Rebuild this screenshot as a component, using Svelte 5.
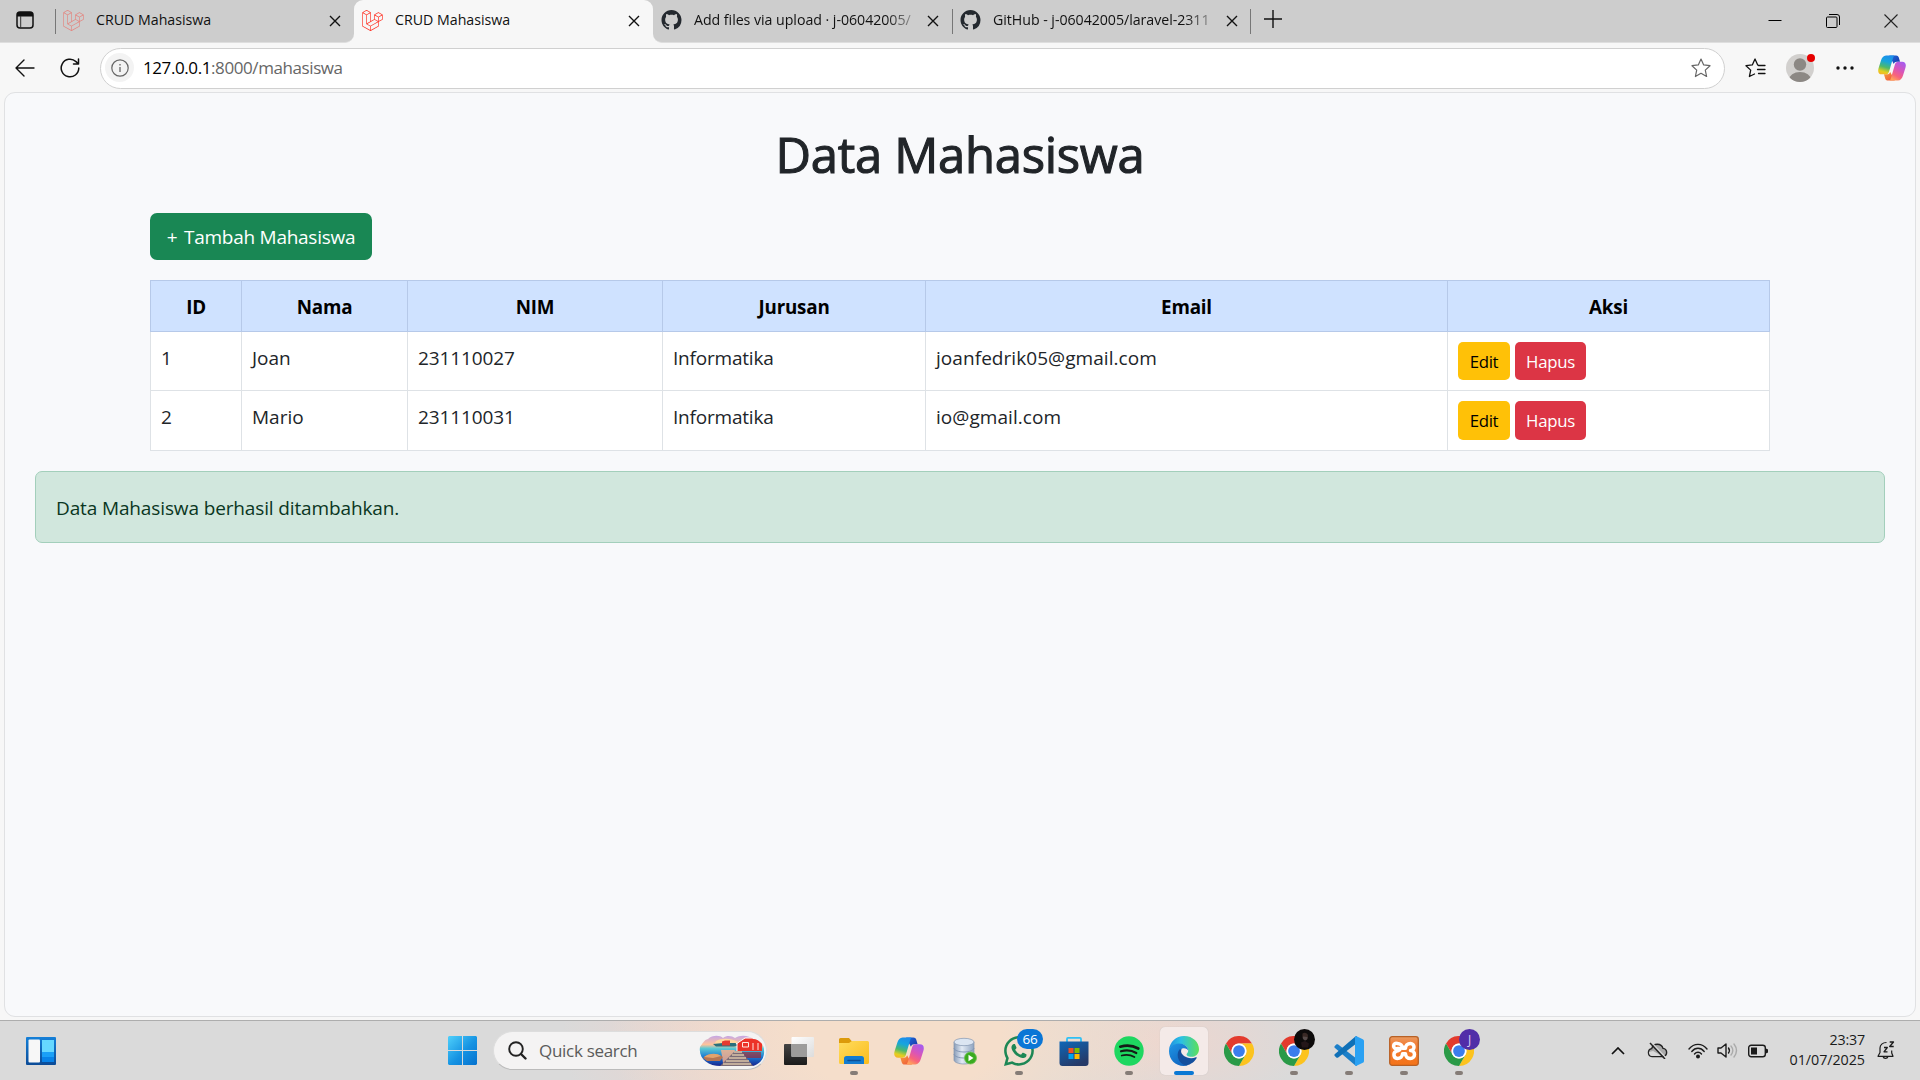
<script lang="ts">
  type Tab = { title: string; icon: 'laravel' | 'github'; active?: boolean; faded?: boolean };

  const tabs: Tab[] = [
    { title: 'CRUD Mahasiswa', icon: 'laravel', faded: true },
    { title: 'CRUD Mahasiswa', icon: 'laravel', active: true },
    { title: 'Add files via upload · j-06042005/', icon: 'github' },
    { title: 'GitHub - j-06042005/laravel-2311', icon: 'github' }
  ];

  const columns = ['ID', 'Nama', 'NIM', 'Jurusan', 'Email', 'Aksi'];

  const students = [
    { id: 1, nama: 'Joan', nim: '231110027', jurusan: 'Informatika', email: 'joanfedrik05@gmail.com' },
    { id: 2, nama: 'Mario', nim: '231110031', jurusan: 'Informatika', email: 'io@gmail.com' }
  ];

  const apps = [
    { name: 'taskview' },
    { name: 'explorer', running: true },
    { name: 'copilot' },
    { name: 'database' },
    { name: 'whatsapp', running: true },
    { name: 'store' },
    { name: 'spotify', running: true },
    { name: 'edge', running: true, current: true },
    { name: 'chrome' },
    { name: 'chrome-photo', running: true },
    { name: 'vscode', running: true },
    { name: 'xampp', running: true },
    { name: 'chrome-j', running: true }
  ];
</script>

{#snippet laravel(faded: boolean)}
  <svg class="favicon" class:faded width="21" height="21" viewBox="0 0 24 24">
    <path fill="#ff2d20" d="M23.642 5.43a.364.364 0 01.014.1v5.149c0 .135-.073.26-.189.326l-4.323 2.49v4.934a.378.378 0 01-.188.326L9.93 23.949a.316.316 0 01-.066.027c-.008.002-.016.008-.024.01a.348.348 0 01-.192 0c-.011-.002-.02-.008-.03-.012-.02-.008-.042-.014-.062-.025L.533 18.755a.376.376 0 01-.189-.326V2.974c0-.033.005-.066.014-.098.003-.012.01-.02.014-.032a.369.369 0 01.023-.058c.004-.013.015-.022.023-.033l.033-.045c.012-.01.025-.018.037-.027.014-.012.027-.024.041-.034H.53L5.043.05a.375.375 0 01.375 0L9.93 2.647h.002c.015.01.027.021.04.033l.038.027c.013.014.02.03.033.045.008.011.02.021.025.033.01.02.017.038.024.058.003.011.01.021.013.032.01.031.014.064.014.098v9.652l3.76-2.164V5.527c0-.033.004-.066.013-.098.003-.01.01-.02.013-.032a.487.487 0 01.024-.059c.007-.012.018-.02.025-.033.012-.015.021-.03.033-.043.012-.012.025-.02.037-.028.014-.01.026-.023.041-.032h.001l4.513-2.598a.375.375 0 01.375 0l4.513 2.598c.016.01.027.021.042.031.012.01.025.018.036.028.013.014.022.03.034.044.008.012.019.021.024.033.011.02.018.04.024.06.006.01.012.021.015.032zm-.74 5.032V6.179l-1.578.908-2.182 1.256v4.283zm-4.51 7.75v-4.287l-2.147 1.225-6.126 3.498v4.325zM1.093 3.624v14.588l8.273 4.761v-4.325l-4.322-2.445-.002-.003H5.04c-.014-.01-.025-.021-.04-.031-.011-.01-.024-.018-.035-.027l-.001-.002c-.013-.012-.021-.025-.031-.04-.01-.011-.021-.022-.028-.036h-.003c-.008-.014-.013-.031-.02-.047-.006-.016-.014-.027-.018-.043a.49.49 0 01-.008-.057c-.002-.014-.006-.027-.006-.041V5.789l-2.18-1.257zM5.23.81L1.47 2.974l3.76 2.164 3.758-2.164zm1.956 13.505l2.182-1.256V3.624l-1.58.91-2.182 1.255v9.435zm11.581-10.95l-3.76 2.163 3.76 2.163 3.759-2.164zm-.376 4.978L16.21 7.087 14.63 6.18v4.283l2.182 1.256 1.58.908zm-8.65 9.654l5.514-3.148 2.756-1.572-3.757-2.163-4.323 2.489-3.941 2.27z" />
  </svg>
{/snippet}

{#snippet github()}
  <svg class="favicon" width="20" height="20" viewBox="0 0 16 16">
    <path fill="#24292f" d="M8 0C3.58 0 0 3.58 0 8c0 3.54 2.29 6.53 5.47 7.59.4.07.55-.17.55-.38 0-.19-.01-.82-.01-1.49-2.01.37-2.53-.49-2.69-.94-.09-.23-.48-.94-.82-1.13-.28-.15-.68-.52-.01-.53.63-.01 1.08.58 1.23.82.72 1.21 1.87.87 2.33.66.07-.52.28-.87.51-1.07-1.78-.2-3.64-.89-3.64-3.95 0-.87.31-1.59.82-2.15-.08-.2-.36-1.02.08-2.12 0 0 .67-.21 2.2.82.64-.18 1.32-.27 2-.27s1.36.09 2 .27c1.53-1.04 2.2-.82 2.2-.82.44 1.1.16 1.92.08 2.12.51.56.82 1.27.82 2.15 0 3.07-1.87 3.75-3.65 3.95.29.25.54.73.54 1.48 0 1.07-.01 1.93-.01 2.2 0 .21.15.46.55.38A8.01 8.01 0 0 0 16 8c0-4.42-3.58-8-8-8z" />
  </svg>
{/snippet}

{#snippet copilot(size: number, key: string)}
  <svg width={size} height={size} viewBox="0 0 30 30">
    <defs>
      <linearGradient id="{key}-a" x1="0.5" y1="0" x2="0.25" y2="1">
        <stop offset="0" stop-color="#1c8fea" />
        <stop offset="0.3" stop-color="#16a5dd" />
        <stop offset="0.6" stop-color="#4db96b" />
        <stop offset="0.85" stop-color="#e4cf1f" />
        <stop offset="1" stop-color="#f5b52a" />
      </linearGradient>
      <linearGradient id="{key}-b" x1="0.8" y1="0" x2="0.3" y2="1">
        <stop offset="0" stop-color="#a45cf0" />
        <stop offset="0.45" stop-color="#d955b8" />
        <stop offset="0.75" stop-color="#f8637c" />
        <stop offset="1" stop-color="#ffa25a" />
      </linearGradient>
      <linearGradient id="{key}-c" x1="0" y1="0" x2="1" y2="0.7">
        <stop offset="0" stop-color="#1c70e0" />
        <stop offset="1" stop-color="#1b3cae" />
      </linearGradient>
      <linearGradient id="{key}-d" x1="0" y1="0" x2="1" y2="1">
        <stop offset="0" stop-color="#f7a13c" />
        <stop offset="1" stop-color="#ee4d3b" />
      </linearGradient>
    </defs>
    <path fill="url(#{key}-c)" d="M12 1.5h7.4c1.5 0 2.4.9 2.9 2.3l1.3 4.4h-3.4c-1.7 0-2.7.8-3.3 2.5z" />
    <path fill="url(#{key}-d)" d="M18 28.5h-7.4c-1.5 0-2.4-.9-2.9-2.3l-1.3-4.4h3.4c1.7 0 2.7-.8 3.3-2.5z" />
    <path fill="url(#{key}-a)" d="M17.5 1.5H8.6C5.9 1.5 4.2 3.8 3.2 6.9L.6 15.3C-.5 19 .6 21.8 4.2 21.8h4.1c2 0 2.9-1 3.5-2.8l4-13.6c.5-1.7.9-3.1 1.7-3.9z" />
    <path fill="url(#{key}-b)" d="M12.5 28.5h8.9c2.7 0 4.4-2.3 5.4-5.4l2.6-8.4c1.1-3.7 0-6.5-3.6-6.5h-4.1c-2 0-2.9 1-3.5 2.8l-4 13.6c-.5 1.7-.9 3.1-1.7 3.9z" />
  </svg>
{/snippet}

{#snippet chrome()}
  <svg width="30" height="30" viewBox="0 0 48 48">
    <path fill="#e33b2e" d="M3.2 12A24 24 0 0 1 44.8 12H24a12 12 0 0 0-10.4 18z" />
    <path fill="#fcc31e" d="M44.8 12A24 24 0 0 1 24 48l10.4-18A12 12 0 0 0 24 12z" />
    <path fill="#2a9a47" d="M24 48A24 24 0 0 1 3.2 12l10.4 18a12 12 0 0 0 20.8 0z" />
    <circle cx="24" cy="24" r="12" fill="#fff" />
    <circle cx="24" cy="24" r="9.4" fill="#3b7ded" />
  </svg>
{/snippet}

{#snippet appIcon(name: string)}
  {#if name === 'taskview'}
    <svg width="30" height="30" viewBox="0 0 30 30">
      <defs>
        <linearGradient id="tv-d" x1="0" y1="0" x2="0" y2="1"><stop offset="0" stop-color="#444" /><stop offset="1" stop-color="#1b1b1b" /></linearGradient>
        <linearGradient id="tv-l" x1="0" y1="0" x2="1" y2="1"><stop offset="0" stop-color="#fff" /><stop offset="1" stop-color="#dcdcdc" /></linearGradient>
      </defs>
      <rect x="0" y="8" width="23" height="21" rx="1" fill="url(#tv-d)" />
      <rect x="7.500" y="1" width="22.500" height="20" rx="1" fill="url(#tv-l)" />
      <path fill="#9d9c9b" d="M7.500 8H23v13H8.500a1 1 0 0 1-1-1z" />
    </svg>
  {:else if name === 'explorer'}
    <svg width="30" height="30" viewBox="0 0 30 30">
      <defs><linearGradient id="ex" x1="0" y1="0" x2="1" y2="1"><stop offset="0" stop-color="#ffdc5e" /><stop offset="1" stop-color="#fbbc1c" /></linearGradient></defs>
      <path fill="#dc9a0a" d="M0 3.500A1.500 1.500 0 0 1 1.500 2H10l3 3.500V9H0z" />
      <path fill="url(#ex)" d="M0 7h10l3-2h15.500A1.500 1.500 0 0 1 30 6.500v20a1.500 1.500 0 0 1-1.500 1.500h-27A1.500 1.500 0 0 1 0 26.500z" />
      <path fill="#147cd0" d="M5 28v-5.500A2.500 2.500 0 0 1 7.500 20h15a2.500 2.500 0 0 1 2.500 2.500V28z" />
      <path stroke="#0b4f96" stroke-width="1.500" stroke-linecap="round" d="M9 24.500h12" />
    </svg>
  {:else if name === 'copilot'}
    {@render copilot(30, 'tb')}
  {:else if name === 'database'}
    <svg width="30" height="30" viewBox="0 0 30 30">
      <defs><linearGradient id="db" x1="0" y1="0" x2="1" y2="0"><stop offset="0" stop-color="#8a9db8" /><stop offset="0.4" stop-color="#e2eaf5" /><stop offset="1" stop-color="#8ea3c0" /></linearGradient></defs>
      <path fill="url(#db)" stroke="#8295b0" stroke-width="0.700" d="M5 6v18c0 2.200 4.500 4 10 4s10-1.800 10-4V6z" />
      <ellipse cx="15" cy="6" rx="10" ry="3.700" fill="#dbe5f2" stroke="#8295b0" stroke-width="0.700" />
      <path fill="none" stroke="#7f93b2" stroke-width="0.900" d="M5 12c0 2.200 4.500 4 10 4s10-1.800 10-4M5 18c0 2.200 4.500 4 10 4s10-1.800 10-4" />
      <circle cx="21.500" cy="22" r="6" fill="#3aab20" stroke="#6fc153" stroke-width="0.800" />
      <path fill="#fff" d="M19.500 18.800l5 3.200-5 3.200z" />
    </svg>
  {:else if name === 'whatsapp'}
    <svg width="30" height="30" viewBox="0 0 16 16">
      <path fill="#1d8755" d="M13.601 2.326A7.854 7.854 0 0 0 7.994 0C3.627 0 .068 3.558.064 7.926c0 1.399.366 2.760 1.057 3.965L0 16l4.204-1.102a7.933 7.933 0 0 0 3.790.965h.004c4.368 0 7.926-3.558 7.930-7.930A7.898 7.898 0 0 0 13.600 2.326zM7.994 14.521a6.573 6.573 0 0 1-3.356-.920l-.240-.144-2.494.654.666-2.433-.156-.251a6.560 6.560 0 0 1-1.007-3.505c0-3.626 2.957-6.584 6.591-6.584a6.560 6.560 0 0 1 4.660 1.931 6.557 6.557 0 0 1 1.928 4.660c-.004 3.639-2.961 6.592-6.592 6.592zm3.615-4.934c-.197-.099-1.170-.578-1.353-.646-.182-.065-.315-.099-.445.099-.133.197-.513.646-.627.775-.114.133-.232.148-.430.050-.197-.100-.836-.308-1.592-.985-.590-.525-.985-1.175-1.103-1.372-.114-.198-.011-.304.088-.403.087-.088.197-.232.296-.346.100-.114.133-.198.198-.330.065-.134.034-.248-.015-.347-.050-.099-.445-1.076-.612-1.470-.160-.389-.323-.335-.445-.340-.114-.007-.247-.007-.380-.007a.729.729 0 0 0-.529.247c-.182.198-.691.677-.691 1.654 0 .977.710 1.916.810 2.049.098.133 1.394 2.132 3.383 2.992.470.205.840.326 1.129.418.475.152.904.129 1.246.080.380-.058 1.171-.480 1.338-.943.164-.464.164-.860.114-.943-.049-.084-.182-.133-.380-.232z" />
    </svg>
    <span class="badge count">66</span>
  {:else if name === 'store'}
    <svg width="30" height="30" viewBox="0 0 30 30">
      <defs><linearGradient id="st" x1="0" y1="0" x2="0.500" y2="1"><stop offset="0" stop-color="#0d67b8" /><stop offset="1" stop-color="#263a68" /></linearGradient></defs>
      <path fill="none" stroke="#2fc0f5" stroke-width="1.800" d="M8 7V2.900A1 1 0 0 1 9 1.900h12a1 1 0 0 1 1 1V7" />
      <path fill="url(#st)" d="M.5 5.500h29V27a3 3 0 0 1-3 3h-23a3 3 0 0 1-3-3z" />
      <path fill="#f25022" d="M9.500 12h5v5h-5z" /><path fill="#7fba00" d="M15.500 12h5v5h-5z" />
      <path fill="#00a4ef" d="M9.500 18h5v5h-5z" /><path fill="#ffb900" d="M15.500 18h5v5h-5z" />
    </svg>
  {:else if name === 'spotify'}
    <svg width="30" height="30" viewBox="0 0 30 30">
      <circle cx="15" cy="15" r="14.700" fill="#1ed760" />
      <g fill="none" stroke="#151b17" stroke-linecap="round">
        <path stroke-width="2.700" d="M6.300 10.700c6-1.700 12.800-1.100 18 1.800" />
        <path stroke-width="2.200" d="M7 15.300c5.300-1.500 10.900-.900 15.300 1.700" />
        <path stroke-width="1.800" d="M7.700 19.500c4.500-1.200 9-.700 12.700 1.500" />
      </g>
    </svg>
  {:else if name === 'edge'}
    <svg width="30" height="30" viewBox="0 0 256 256">
      <defs>
        <linearGradient id="ed-a" x1="0" y1="0.300" x2="1" y2="0.300"><stop offset="0" stop-color="#1f8fe0" /><stop offset="0.400" stop-color="#2cc0e4" /><stop offset="1" stop-color="#5de05a" /></linearGradient>
        <linearGradient id="ed-b" x1="0" y1="0" x2="0.600" y2="1"><stop offset="0" stop-color="#1e96e6" /><stop offset="1" stop-color="#1266c0" /></linearGradient>
      </defs>
      <path fill="url(#ed-a)" d="M0 120C6 50 60 0 128 0c78 0 128 55 128 112 0 40-32 66-66 66-30 0-40-13-40-20 0-8 14-14 14-34 0-28-30-56-70-56C48 68 12 90 0 120z" />
      <path fill="url(#ed-b)" d="M0 128c0-32 36-64 84-64 46 0 80 28 80 62-4-12-18-22-36-22-26 0-46 22-46 54 0 48 36 84 78 90-10 5-22 8-34 8C54 256 0 200 0 128z" />
      <path fill="#134f9e" d="M92 112c-12 12-18 30-18 50 0 46 34 82 74 89 40-7 72-33 88-63 3-6-2-9-7-7-12 5-25 8-40 8-48 0-86-30-86-58 0-7 2-14 5-19z" />
    </svg>
  {:else if name === 'chrome'}
    {@render chrome()}
  {:else if name === 'chrome-photo'}
    {@render chrome()}
    <span class="badge photo">
      <svg width="21" height="21" viewBox="0 0 21 21">
        <circle cx="10.500" cy="10.500" r="10.500" fill="#0d0b0b" />
        <path fill="#392925" d="M8.500 4.500c2-1.500 5-.500 5.500 2l-.3 3.500-2.700 1.500L8.400 9z" />
        <path fill="#554a49" d="M9 7.500l4.500.500-.5 2.500-2 1L9 10z" />
        <path fill="#241719" d="M7 13.500l4-1.500 4 2.500-1 4H8z" />
      </svg>
    </span>
  {:else if name === 'vscode'}
    <svg width="30" height="30" viewBox="0 0 30 30">
      <path fill="#1c7fc9" d="M.6 10.200l1.700-1.600c.6-.5 1.300-.5 1.900-.1L23 23v6.500c-.800.400-1.500.200-2.200-.4L.7 11.800c-.5-.5-.5-1.100-.1-1.600z" />
      <path fill="#0f70b7" d="M.6 19.800l1.700 1.600c.6.500 1.300.5 1.900.1L23 7V.500c-.800-.400-1.500-.200-2.200.4L.7 18.200c-.5.500-.5 1.100-.1 1.600z" />
      <path fill="#2aa1f3" d="M22.500.3l6.300 2.900c.8.400 1.200 1 1.200 1.900v19.800c0 .900-.4 1.500-1.200 1.900l-6.300 2.900c-.9.400-1.500 0-1.500-1V1.300c0-1 .6-1.400 1.500-1z" />
    </svg>
  {:else if name === 'xampp'}
    <svg width="30" height="30" viewBox="0 0 30 30">
      <defs><linearGradient id="xp" x1="0" y1="0" x2="0" y2="1"><stop offset="0" stop-color="#e99b62" /><stop offset="0.250" stop-color="#f2803a" /><stop offset="1" stop-color="#f47318" /></linearGradient></defs>
      <rect x="0.700" y="0.700" width="28.600" height="28.600" rx="2.500" fill="url(#xp)" stroke="#b86126" stroke-width="1.300" />
      <path fill="none" stroke="#fff" stroke-width="3.500" stroke-linejoin="round" stroke-linecap="round" d="M11.500 12.500H8.300a2.700 2.700 0 1 1 0-5c3 0 5.200 2 5.200 4.800h3c0-2.800 2-4.800 5-4.800a3.500 3.500 0 0 1 0 7 3.800 3.800 0 0 1 0 8c-3 0-5-2-5-4.800h-3c0 2.800-2.200 4.800-5.200 4.800a3.800 3.800 0 0 1-.3-7.500c1.200-.5 2.700-.5 3.500-2.500z" />
    </svg>
  {:else}
    {@render chrome()}
    <span class="badge letter">J</span>
  {/if}
{/snippet}

<div class="screen">
  <header class="tabstrip">
    <div class="workspaces">
      <svg width="18" height="18" viewBox="0 0 18 18">
        <rect x="1" y="1" width="16" height="16" rx="3" fill="none" stroke="#111" stroke-width="1.500" />
        <path fill="#111" d="M1 5.500V4a3 3 0 0 1 3-3h10a3 3 0 0 1 3 3v1.500z" />
        <path stroke="#333" stroke-width="1" d="M4.700 5v12" />
      </svg>
    </div>
    {#each tabs as tab, i}
      <div class="tab" class:active={tab.active} class:before={i === 0} class:after={i === 2} class:last={i === 3}>
        {#if tab.icon === 'laravel'}{@render laravel(!!tab.faded)}{:else}{@render github()}{/if}
        <span class="title" class:clipped={tab.icon === 'github'}>{tab.title}</span>
        <svg class="close" width="12" height="12" viewBox="0 0 12 12"><path stroke="#111" stroke-width="1.400" d="M1 1l10 10M11 1L1 11" /></svg>
      </div>
    {/each}
    <svg class="newtab" width="18" height="18" viewBox="0 0 18 18"><path stroke="#111" stroke-width="1.400" d="M9 0v18M0 9h18" /></svg>
    <div class="controls">
      <svg width="14" height="14" viewBox="0 0 14 14"><path stroke="#000" stroke-width="1" d="M.5 6.500h13" /></svg>
      <svg width="14" height="14" viewBox="0 0 14 14"><path fill="none" stroke="#000" stroke-width="1" d="M.5 4a1 1 0 0 1 1-1H10a1 1 0 0 1 1 1v8.500a1 1 0 0 1-1 1H1.500a1 1 0 0 1-1-1zM3 .5h8A2.500 2.500 0 0 1 13.500 3v8" /></svg>
      <svg width="14" height="14" viewBox="0 0 14 14"><path stroke="#222" stroke-width="1.100" d="M.5.500l13 13M13.500.500l-13 13" /></svg>
    </div>
  </header>

  <nav class="toolbar">
    <svg class="back" width="20" height="18" viewBox="0 0 20 18"><path fill="none" stroke="#111" stroke-width="1.400" stroke-linecap="round" stroke-linejoin="round" d="M19 9H1M9 1L1 9l8 8" /></svg>
    <svg class="reload" width="20" height="20" viewBox="0 0 20 20"><path fill="none" stroke="#111" stroke-width="1.500" stroke-linecap="round" stroke-linejoin="round" d="M18.800 10A8.800 8.800 0 1 1 16 3.600L18.500 6M18.500 1v5h-5" /></svg>
    <div class="omnibox">
      <span class="info">
        <svg width="18" height="18" viewBox="0 0 18 18"><circle cx="9" cy="9" r="8.200" fill="none" stroke="#666" stroke-width="1.200" /><path stroke="#666" stroke-width="1.300" d="M9 8v5M9 5v1.500" /></svg>
      </span>
      <span class="url"><b>127.0.0.1</b>:8000/mahasiswa</span>
      <svg class="star" width="20" height="20" viewBox="0 0 20 20"><path fill="none" stroke="#666" stroke-width="1.200" stroke-linejoin="round" d="M10 1l2.700 5.900 6.300.800-4.700 4.400 1.300 6.400L10 15.300l-5.600 3.200 1.300-6.400L1 7.700l6.300-.8z" /></svg>
    </div>
    <svg class="favs" width="21" height="20" viewBox="0 0 21 20"><path fill="none" stroke="#111" stroke-width="1.300" stroke-linejoin="round" stroke-linecap="round" d="M13 7h-.3L10 1 7.300 6.900 1 7.700l4.700 4.400-1.300 6.400L9.500 16M13.500 7.500H20M12.500 11.500H20M13.500 15.500H20" /></svg>
    <div class="profile">
      <svg width="28" height="28" viewBox="0 0 28 28">
        <clipPath id="pf"><circle cx="14" cy="14" r="14" /></clipPath>
        <g clip-path="url(#pf)"><path fill="#d2d0ce" d="M0 0h28v28H0z" /><circle cx="14" cy="10.500" r="6.200" fill="#8c8884" /><ellipse cx="14" cy="26" rx="11" ry="8" fill="#8c8884" /></g>
      </svg>
      <span class="dot"></span>
    </div>
    <svg class="more" width="18" height="4" viewBox="0 0 18 4"><circle cx="2" cy="2" r="1.700" /><circle cx="9" cy="2" r="1.700" /><circle cx="16" cy="2" r="1.700" /></svg>
    {@render copilot(28, 'nav')}
  </nav>

  <main class="page">
    <h1>Data Mahasiswa</h1>
    <div class="container">
      <button class="btn add"><span class="plus">+</span> Tambah Mahasiswa</button>
      <table>
        <colgroup><col class="c1" /><col class="c2" /><col class="c3" /><col class="c4" /><col class="c5" /><col class="c6" /></colgroup>
        <thead>
          <tr>{#each columns as column}<th>{column}</th>{/each}</tr>
        </thead>
        <tbody>
          {#each students as s}
            <tr>
              <td>{s.id}</td>
              <td>{s.nama}</td>
              <td class="nim">{s.nim}</td>
              <td class="major">{s.jurusan}</td>
              <td class="email">{s.email}</td>
              <td><div class="actions"><button class="btn edit">Edit</button><button class="btn delete">Hapus</button></div></td>
            </tr>
          {/each}
        </tbody>
      </table>
    </div>
    <div class="alert">Data Mahasiswa berhasil ditambahkan.</div>
  </main>

  <footer class="taskbar">
    <svg class="widgets" width="30" height="28" viewBox="0 0 30 28">
      <defs><linearGradient id="wg" x1="0" y1="0" x2="0" y2="1"><stop offset="0" stop-color="#1580d8" /><stop offset="1" stop-color="#0b4b97" /></linearGradient></defs>
      <rect width="30" height="28" rx="1" fill="url(#wg)" />
      <rect x="2.500" y="2.500" width="11.500" height="23" rx="1" fill="#f7f7f7" />
      <path fill="#66d8ff" d="M16 3h12v12H16z" /><path fill="#1aa0f7" d="M16 15h12v5H16z" /><path fill="#0883e8" d="M16 20h12v5H16z" />
    </svg>
    <svg class="start" width="29" height="29" viewBox="0 0 29 29">
      <defs><linearGradient id="ws" gradientUnits="userSpaceOnUse" x1="0" y1="0" x2="29" y2="29"><stop offset="0" stop-color="#4fd0fb" /><stop offset="0.550" stop-color="#1592e2" /><stop offset="1" stop-color="#0571ce" /></linearGradient></defs>
      <path fill="url(#ws)" d="M1 0h13v14H0V1zM15 0h13l1 1v13H15zM0 15h14v14H1l-1-1zM15 15h14v13l-1 1H15z" />
    </svg>
    <div class="search">
      <svg width="19" height="19" viewBox="0 0 19 19"><circle cx="8" cy="8" r="6.800" fill="none" stroke="#222" stroke-width="1.900" /><path stroke="#222" stroke-width="2.400" stroke-linecap="round" d="M13 13l4.500 4.500" /></svg>
      <span>Quick search</span>
      <svg class="scene" width="66" height="32" viewBox="0 0 66 32">
        <defs>
          <clipPath id="sc"><path d="M1 12C4 8 5 5 9 4c4-4 12-4 15-1 4-3 9-2 12 0 6-4 15-2 18 1 6 0 11 5 11 11 1 8-4 14-11 16H24C10 32-1 24 1 12z" /></clipPath>
          <linearGradient id="sky" x1="0" y1="0" x2="0" y2="1"><stop offset="0" stop-color="#c0a4ec" /><stop offset="0.300" stop-color="#ffc39a" /><stop offset="0.420" stop-color="#5cc8d3" /><stop offset="0.700" stop-color="#1876d2" /><stop offset="1" stop-color="#171985" /></linearGradient>
        </defs>
        <g clip-path="url(#sc)">
          <path fill="url(#sky)" d="M0 0h66v32H0z" />
          <path fill="#ffd7a0" d="M17 6c6-3 14-3 22 1l-3 3H15z" />
          <path fill="#2a6f7c" d="M14 9l10-1h12l6 2-7 1.500H17z" />
          <path fill="#e53a31" d="M23 6.500l3-1h5v5h-8z" />
          <path fill="#9b2a38" opacity="0.7" d="M38 17h24v6H40z" />
          <path fill="#ffb08a" opacity="0.8" d="M22 15h14l-6 13h-6z" />
          <path fill="#ec3328" d="M38 8l8-5h11l6 5v8H38z" />
          <path fill="none" stroke="#fff" stroke-width="1" d="M37 9l9-6h11l7 6M38 8v8" />
          <path fill="none" stroke="#ffe8df" stroke-width="1" d="M43.500 7.500h6V12h-6zM54 8v7M59 8v7" />
          <path fill="#b67552" d="M4 23c5-5 15-5 20-1l-3 4H8z" /><path fill="#e3a36d" d="M5 22c5-4 13-4 17-1l-8 2z" />
          <path fill="#7b6b76" d="M36 16h6l13 16H20z" />
          <path stroke="#d9c2a8" stroke-width="1.500" d="M35 17h8M33 20h12M30 23h17M27 26h23M24 29h28" />
        </g>
      </svg>
    </div>
    <div class="apps">
      {#each apps as app}
        <div class="app" class:current={app.current} class:running={app.running}>{@render appIcon(app.name)}</div>
      {/each}
    </div>
    <div class="tray">
      <svg width="14" height="8" viewBox="0 0 14 8"><path fill="none" stroke="#111" stroke-width="1.700" d="M1 7l6-6 6 6" /></svg>
      <svg class="cloud" width="21" height="17" viewBox="0 0 21 17">
        <path fill="#aaa" stroke="#222" stroke-width="1.400" d="M5 14.500A4 4 0 0 1 4.700 6.600 5.900 5.900 0 0 1 16 6.400a4.100 4.100 0 0 1 .3 8.100z" />
        <path fill="#dadada" d="M2 10l4-1 9 5H5C3 14 2 12 2 10z" />
        <path stroke="#dadada" stroke-width="1.500" d="M4 0l15 16" /><path stroke="#222" stroke-width="1.500" d="M3 1l15 16" />
      </svg>
      <svg class="wifi" width="20" height="16" viewBox="0 0 20 16"><g fill="none" stroke="#1b1b1b" stroke-width="1.400" stroke-linecap="round"><path d="M1 6c5-6.200 13-6.200 18 0M3.800 8.500c3.500-4.300 8.900-4.300 12.400 0M6.500 11c2-2.300 5-2.300 7 0" /></g><circle cx="10" cy="13.500" r="2" fill="#1b1b1b" /></svg>
      <svg class="sound" width="21" height="17" viewBox="0 0 21 17"><g fill="none" stroke-width="1.400" stroke-linecap="round" stroke-linejoin="round"><path stroke="#1b1b1b" d="M1 6v5h3l5 4V2L4 6zM11.500 6q1.800 2.500 0 5" /><path stroke="#aaa" d="M14 4q3.600 4.500 0 9M17 2q5 6.500 0 13" /></g></svg>
      <svg class="battery" width="20" height="14" viewBox="0 0 20 14"><rect x="0.700" y="1.200" width="16.600" height="11.600" rx="2.500" fill="none" stroke="#1b1b1b" stroke-width="1.400" /><path fill="#1b1b1b" d="M3 3.500h6v7H3zM18 4.500l2 1v3l-2 1z" /></svg>
      <div class="clock"><span>23:37</span><span class="date">01/07/2025</span></div>
      <svg class="bell" width="18" height="19" viewBox="0 0 18 19">
        <g fill="none" stroke="#1b1b1b" stroke-width="1.200" stroke-linejoin="round"><path d="M9.500 1.500C5.500 1.500 3 4 3 7v4.500L1 15.300h15l-1.300-3.300V9.500M6 15.500a2.600 2.600 0 0 0 5 0" /><path stroke-width="1.300" d="M7 6.500h3.300L7 10.800h3.500M12.700 1H16.500l-3.800 4.500h4" /></g>
      </svg>
    </div>
  </footer>
</div>

<style>
  :global(body) { margin: 0; overflow: hidden; }
  .screen { width: 1920px; height: 1080px; display: flex; flex-direction: column; background: #f7f7f7; font-family: 'Open Sans', 'Noto Sans', sans-serif; color: #212529; }
  .screen * { box-sizing: border-box; }
  svg { display: block; flex: none; }

  .tabstrip { height: 43px; display: flex; background: #f7f7f7; flex: none; }
  .workspaces { width: 55px; padding: 11px 0 0 16px; background: #cdcdcd; border-bottom: 1px solid #dedede; }
  .tab { width: 299px; height: 43px; display: flex; align-items: flex-start; padding: 10px 13px 0 8px; background: #cdcdcd; border-bottom: 1px solid #dedede; }
  .tab.before { border-radius: 0 0 9px 0; background: linear-gradient(#777, #777) 0 9px / 1px 25px no-repeat #cdcdcd; }
  .tab.active { background: #f7f7f7; border-color: #f7f7f7; border-radius: 9px 9px 0 0; box-shadow: 0 -10px 0 #cdcdcd; }
  .tab.after { border-radius: 0 0 0 9px; }
  .tab.last { background: linear-gradient(#777, #777) 0 9px / 1px 25px no-repeat, linear-gradient(#777, #777) 100% 9px / 1px 25px no-repeat, #cdcdcd; }
  .favicon { width: 21px; }
  .favicon.faded { opacity: 0.45; }
  .title { flex: 1; min-width: 0; margin: -1px 10px 0 12px; font-size: 14.2px; line-height: 22px; letter-spacing: 0; white-space: nowrap; color: #111; }
  .title.clipped { letter-spacing: -0.04px; mask-image: linear-gradient(90deg, #000 192px, rgba(0, 0, 0, 0.15) 224px); }
  .close { margin-top: 5px; }
  .newtab { box-sizing: content-box !important; padding: 10px 20px 14px 13px; background: #cdcdcd; border-bottom: 1px solid #dedede; }
  .controls { flex: 1; display: flex; justify-content: flex-end; gap: 44px; padding: 14px 22px 0 0; background: #cdcdcd; border-bottom: 1px solid #dedede; }

  .toolbar { height: 49px; flex: none; display: flex; align-items: center; padding: 0 12px 0 15px; }
  .reload { margin-left: 25px; }
  .omnibox { width: 1625px; height: 41px; margin: 1px 20px 0 20px; display: flex; align-items: center; padding: 0 13px 1px 4px; border: 1px solid #d0d0d0; border-radius: 21px; background: #fff; }
  .info { width: 29px; height: 29px; border-radius: 50%; background: #f3f3f3; display: grid; place-items: center; }
  .url { margin: -1px 0 0 9px; flex: 1; font-size: 17px; letter-spacing: -0.41px; color: #666; }
  .url b { font-weight: 400; color: #000; }
  .profile { position: relative; margin: 1px 0 0 20px; }
  .dot { position: absolute; top: 0; right: -1px; width: 8px; height: 8px; border-radius: 50%; background: #e60000; }
  .more { margin: 0 24px 0 22px; fill: #111; }

  .page { height: 925px; flex: none; margin: 0 4px; border: 1px solid #e0e1e3; border-radius: 11px; background: #f8f9fb; padding: 30px 30px 0; }
  h1 { height: 60px; margin: 0 0 30px; text-align: center; font-size: 49px; line-height: 62px; font-weight: 400; -webkit-text-stroke: 1.1px #212529; letter-spacing: -0.3px; color: #212529; }
  .container { width: 1620px; margin: 0 auto; }
  .btn { display: block; border: 0; font-family: inherit; text-align: center; white-space: nowrap; padding: 0; }
  .add { width: 222px; height: 47px; border-radius: 7px; background: #198754; color: #fff; font-size: 19px; line-height: 49px; letter-spacing: -0.27px; }
  .plus { margin-right: 2px; }
  table { width: 1620px; margin-top: 20px; border-collapse: collapse; table-layout: fixed; font-size: 19px; line-height: 30px; }
  .c1 { width: 91px; } .c2 { width: 166px; } .c3 { width: 255px; } .c4 { width: 263px; } .c5 { width: 522px; } .c6 { width: 322px; }
  th { height: 51px; padding: 1px 0 0; border: 1px solid #b6c9e9; background: #cfe2ff; color: #000; font-size: 18.8px; font-weight: 700; text-align: center; letter-spacing: -0.2px; }
  td { height: 59px; vertical-align: top; padding: 11px 10px 0; border: 1px solid #dee2e6; background: #fff; }
  .nim { letter-spacing: -0.12px; }
  .major { letter-spacing: -0.2px; }
  .email { letter-spacing: 0.06px; }
  tbody tr:last-child td { height: 60px; }
  tbody tr:first-child td { border-top-color: #b6c9e9; }
  .actions { display: flex; gap: 5px; margin-top: -1px; }
  .actions .btn { height: 38px; border-radius: 5px; font-size: 16.800px; line-height: 39px; letter-spacing: -0.3px; }
  tbody tr:last-child .btn { height: 39px; }
  .edit { width: 52px; background: #ffc107; color: #000; }
  .delete { width: 71px; background: #dc3545; color: #fff; }
  .alert { height: 72px; margin-top: 20px; padding: 1px 20px 0; border: 1px solid #a3cfbb; border-radius: 7px; background: #d1e7dd; color: #0a3622; font-size: 19px; line-height: 70px; letter-spacing: -0.13px; }

  .taskbar { height: 60px; margin-top: 3px; flex: none; display: flex; align-items: center; border-top: 1px solid #adadad; padding: 0 25px 0 26px; background: radial-gradient(ellipse 290px 180px at 900px 10px, #f5decb 35%, transparent 100%), radial-gradient(ellipse 140px 70px at 1170px 20px, #edd6cf, transparent), radial-gradient(ellipse 180px 110px at 740px 20px, #ecd3cd, transparent), #dadada; }
  .start { margin-left: 392px; }
  .search { width: 274px; height: 39px; margin-left: 16px; display: flex; align-items: center; padding: 0 1px 0 14px; border-radius: 20px; background: #f4f3f3; border: 1px solid #ddd; border-bottom-color: #bbb; }
  .search span { flex: 1; margin: -1px 0 0 12px; font-size: 17px; color: #5b5b5b; letter-spacing: -0.3px; white-space: nowrap; }
  .apps { display: flex; gap: 7px; margin-left: 8px; }
  .app { position: relative; width: 48px; height: 48px; display: grid; place-items: center; border-radius: 5px; }
  .app.current { background: #f4eae8; box-shadow: 0 0 1px #bbb; }
  .app.running::after { content: ''; position: absolute; bottom: 0; left: 20px; width: 8px; height: 4px; border-radius: 2px; background: #857c77; }
  .app.current::after { left: 14px; width: 20px; background: #0a78d4; }
  .badge { position: absolute; left: 24px; top: 2px; height: 21px; width: 21px; border-radius: 11px; color: #fff; text-align: center; }
  .count { left: 22px; width: 26px; height: 20px; background: #0a76d6; font-size: 13.500px; line-height: 20px; letter-spacing: -0.3px; }
  .letter { background: #512da8; font-size: 12px; line-height: 21px; color: #d9cdf2; }
  .tray { flex: 1; display: flex; align-items: center; justify-content: flex-end; }
  .cloud { margin-left: 22px; }
  .wifi { margin-left: 20px; }
  .sound { margin-left: 9px; }
  .battery { margin-left: 10px; }
  .clock { width: 97px; display: flex; flex-direction: column; align-items: flex-end; font-size: 14.300px; line-height: 20px; color: #1b1b1b; letter-spacing: -0.2px; margin-top: -2px; }
  .date { letter-spacing: -0.05px; }
  .bell { margin-left: 12px; }
</style>
